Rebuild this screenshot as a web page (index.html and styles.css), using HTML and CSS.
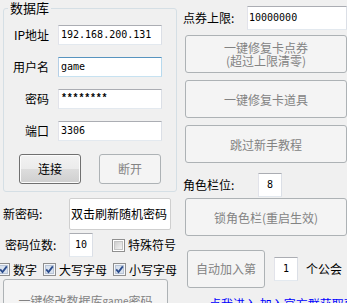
FILE: index.html
```html
<!DOCTYPE html>
<html lang="zh-CN">
<head>
    <meta charset="UTF-8">
    <title>数据库工具</title>
    <link rel="stylesheet" href="styles.css">
</head>
<body>
    <div class="form">
        <div class="left">
            <fieldset class="group">
                <legend>数据库</legend>
                <div class="field"><label>IP地址</label><span class="textbox">192.168.200.131</span></div>
                <div class="field"><label>用户名</label><span class="textbox focused">game</span></div>
                <div class="field"><label>密码</label><span class="textbox stars">********</span></div>
                <div class="field"><label>端口</label><span class="textbox">3306</span></div>
                <div class="conn-row">
                    <button class="btn">连接</button>
                    <button class="btn" disabled>断开</button>
                </div>
            </fieldset>

            <div class="pw-row">
                <label>新密码:</label>
                <span class="pw-box">双击刷新随机密码</span>
            </div>
            <div class="len-row">
                <label>密码位数:</label>
                <span class="textbox small">10</span>
                <span class="check special">
                    <svg width="13" height="13" viewBox="0 0 13 13"><defs><linearGradient id="g0" x1="0" y1="0" x2="1" y2="1"><stop offset="0" stop-color="#cbcbcb"/><stop offset="1" stop-color="#f7f7f7"/></linearGradient></defs><rect x="0.5" y="0.5" width="12" height="12" fill="#fff" stroke="#8f8f8f"/><rect x="2.5" y="2.5" width="8" height="8" fill="url(#g0)" stroke="#c4c4c4"/></svg>
                    特殊符号
                </span>
            </div>
            <div class="checks-row">
                <span class="check">
                    <svg width="13" height="13" viewBox="0 0 13 13"><rect x="0.5" y="0.5" width="12" height="12" fill="#f4f6f9" stroke="#8f8f8f"/><rect x="2.5" y="2.5" width="8" height="8" fill="#d9e2ee" stroke="#b8c4d6"/><path d="M3.2 6.4 L5.5 9 L9.8 3.4" fill="none" stroke="#2b4c8c" stroke-width="1.8"/></svg>
                    数字
                </span>
                <span class="check">
                    <svg width="13" height="13" viewBox="0 0 13 13"><rect x="0.5" y="0.5" width="12" height="12" fill="#f4f6f9" stroke="#8f8f8f"/><rect x="2.5" y="2.5" width="8" height="8" fill="#d9e2ee" stroke="#b8c4d6"/><path d="M3.2 6.4 L5.5 9 L9.8 3.4" fill="none" stroke="#2b4c8c" stroke-width="1.8"/></svg>
                    大写字母
                </span>
                <span class="check">
                    <svg width="13" height="13" viewBox="0 0 13 13"><rect x="0.5" y="0.5" width="12" height="12" fill="#f4f6f9" stroke="#8f8f8f"/><rect x="2.5" y="2.5" width="8" height="8" fill="#d9e2ee" stroke="#b8c4d6"/><path d="M3.2 6.4 L5.5 9 L9.8 3.4" fill="none" stroke="#2b4c8c" stroke-width="1.8"/></svg>
                    小写字母
                </span>
            </div>
            <button class="btn bottom-btn" disabled>一键修改数据库<span class="latin">game</span>密码</button>
        </div>

        <div class="right">
            <div class="limit-row">
                <label>点券上限:</label>
                <span class="textbox wide">10000000</span>
            </div>
            <button class="btn wide-btn first" disabled>一键修复卡点券<br>(超过上限清零)</button>
            <button class="btn wide-btn" disabled>一键修复卡道具</button>
            <button class="btn wide-btn" disabled>跳过新手教程</button>
            <div class="slot-row">
                <label>角色栏位:</label>
                <span class="textbox small">8</span>
            </div>
            <button class="btn wide-btn tight" disabled>锁角色栏(重启生效)</button>
            <div class="guild-row">
                <button class="btn guild-btn" disabled>自动加入第</button>
                <span class="textbox small">1</span>
                <span class="guild-text">个公会</span>
            </div>
            <div class="link">点我进入 加入官方群获取更新</div>
        </div>
    </div>
</body>
</html>
```

FILE: styles.css
```css
body {
    margin: 0;
    width: 347px;
    height: 303px;
    overflow: hidden;
    background-color: #f0f0f0;
    font-family: "Noto Sans CJK SC", "Noto Sans", sans-serif;
    font-size: 12px;
    line-height: 14px;
    color: #000;
}
.form {
    display: flex;
}
.left {
    width: 182px;
    flex: none;
}
.right {
    flex: 1;
    min-width: 0;
    padding-top: 6px;
}

/* group box */
.group {
    box-sizing: border-box;
    width: 174px;
    margin: 0 0 0 3px;
    padding: 9px 0 7px;
    border: 1px solid #d5dfe5;
    border-radius: 3px;
    min-width: 0;
}
.group legend {
    margin-left: 4px;
    padding: 0 2px;
    font-size: 13px;
    line-height: 16px;
}
.field {
    display: flex;
    align-items: center;
    height: 20px;
    margin-bottom: 12px;
}
.field:nth-of-type(4) {
    margin-bottom: 13px;
}
.field label {
    width: 45px;
    margin-right: 9px;
    text-align: right;
}

/* text boxes */
.textbox {
    box-sizing: border-box;
    flex: none;
    width: 104px;
    height: 20px;
    padding-left: 2px;
    border: 1px solid;
    border-color: #abadb3 #dbdfe6 #e3e9ef #e2e3ea;
    background: #fff;
    font-family: "DejaVu Sans Mono", "Liberation Mono", monospace;
    font-size: 10px;
    line-height: 18px;
    white-space: nowrap;
}
.textbox.focused {
    border-color: #5794bf #b7d9ed #c7e2f1 #b5cfe7;
}
.textbox.stars {
    font-family: "Liberation Mono", monospace;
    font-size: 10px;
    font-weight: bold;
    letter-spacing: -0.2px;
}
.textbox.small {
    width: 24px;
    height: 24px;
    padding: 0;
    line-height: 22px;
    text-align: center;
}
.textbox.wide {
    width: 100px;
    height: 24px;
    padding-left: 1px;
    line-height: 22px;
}

/* buttons */
.btn {
    box-sizing: border-box;
    display: flex;
    align-items: center;
    justify-content: center;
    width: 62px;
    height: 30px;
    padding: 0;
    border: 1px solid #707070;
    border-radius: 3px;
    background: linear-gradient(#f2f2f2, #ebebeb 50%, #dddddd 50%, #cfcfcf);
    box-shadow: inset 0 0 0 1px #fcfcfc;
    font: inherit;
    color: #000;
    text-align: center;
}
.btn:disabled {
    border-color: #adb2b5;
    background: #f4f4f4;
    box-shadow: none;
    color: #838383;
}
.conn-row {
    display: flex;
    gap: 18px;
    padding-left: 15px;
}

/* password generator */
.pw-row {
    display: flex;
    align-items: center;
    height: 32px;
    margin-top: 6px;
}
.pw-row label {
    box-sizing: border-box;
    width: 69px;
    padding-left: 3px;
}
.pw-box {
    box-sizing: border-box;
    width: 102px;
    height: 32px;
    padding-left: 1px;
    border: 1px solid #cfcfcf;
    border-radius: 2px;
    background: #fff;
    line-height: 30px;
    white-space: nowrap;
    overflow: hidden;
}
.len-row {
    display: flex;
    align-items: center;
    height: 24px;
    margin-top: 3px;
}
.len-row label {
    box-sizing: border-box;
    width: 69px;
    padding-left: 5px;
}
.check {
    display: flex;
    align-items: center;
    gap: 3px;
    white-space: nowrap;
}
.check svg {
    display: block;
    flex: none;
}
.check.special {
    margin-left: 19px;
}
.checks-row {
    display: flex;
    align-items: center;
    gap: 6px;
    height: 13px;
    margin: 6px 0 0 -3px;
}
.bottom-btn {
    width: 165px;
    height: 44px;
    margin: 3px 0 0 3px;
}
.bottom-btn .latin {
    font-size: 10px;
}

/* right column */
.limit-row, .slot-row {
    display: flex;
    align-items: center;
    height: 24px;
}
.limit-row label {
    box-sizing: border-box;
    width: 74px;
    padding-left: 1px;
}
.slot-row {
    margin-top: 10px;
}
.slot-row label {
    box-sizing: border-box;
    width: 76px;
    padding-left: 1px;
}
.wide-btn {
    width: 162px;
    height: 38px;
    margin: 7px 0 0 3px;
    line-height: 13px;
}
.wide-btn.first {
    margin-top: 5px;
}
.wide-btn.tight {
    margin-top: 1px;
}
.guild-row {
    display: flex;
    align-items: center;
    height: 38px;
    margin-top: 14px;
    padding-left: 5px;
}
.guild-btn {
    width: 78px;
    height: 38px;
    margin-right: 9px;
}
.guild-text {
    margin-left: 8px;
}
.link {
    margin: 9px 0 0 27px;
    color: #0000ff;
    white-space: nowrap;
}
```
